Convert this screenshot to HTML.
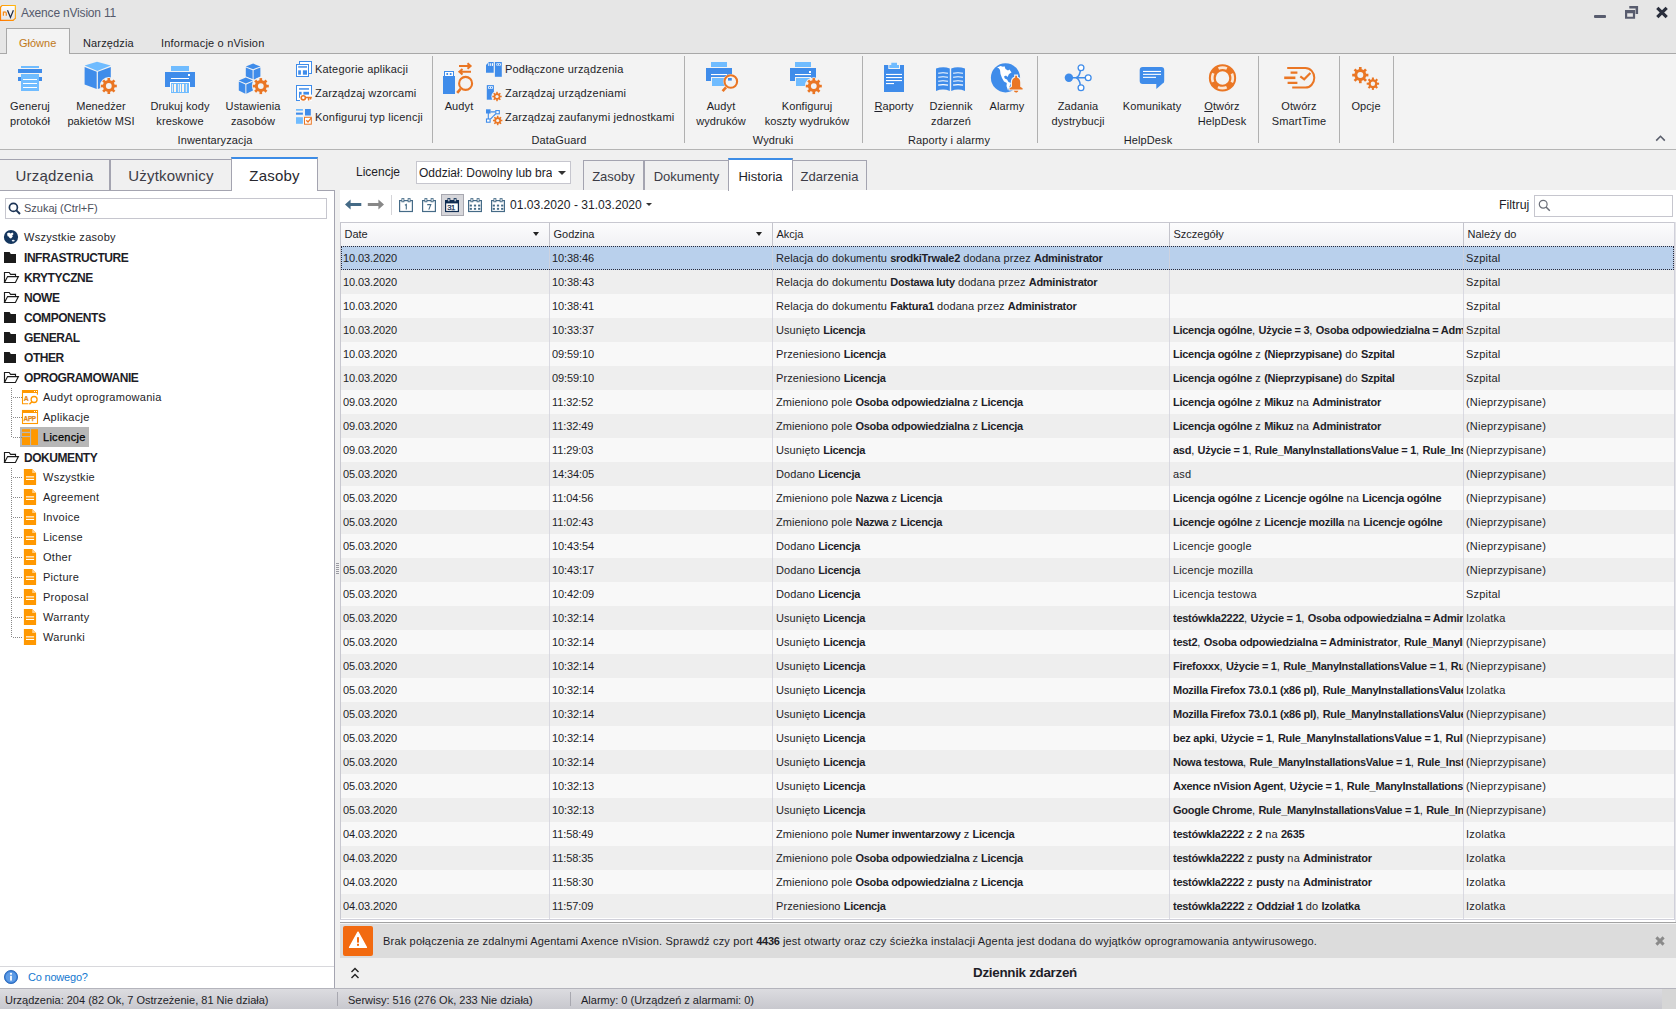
<!DOCTYPE html>
<html><head><meta charset="utf-8"><title>Axence nVision 11</title>
<style>
*{box-sizing:border-box;margin:0;padding:0}
html,body{width:1676px;height:1009px;overflow:hidden;background:#f0f0f0}
body{font-family:"Liberation Sans",sans-serif;font-size:11px;color:#1e1e28;position:relative}
.a{position:absolute}
.t{position:absolute;white-space:nowrap;line-height:14px}
#title{left:0;top:0;width:1676px;height:54px;background:#e6e6e6}
#ribbon{left:0;top:53px;width:1676px;height:97px;background:#f3f3f3;border-top:1px solid #a8a8a8;border-bottom:1px solid #b4b4b4}
#rtab{left:6px;top:28px;width:64px;height:26px;background:#f3f3f3;border:1px solid #a8a8a8;border-bottom:none}
.sep{position:absolute;top:56px;width:1px;height:87px;background:#b0b0b0}
.lb{position:absolute;letter-spacing:0.1px;text-align:center;white-space:nowrap;line-height:15px;font-size:11px;transform:translateX(-50%);top:99px}
.gl{position:absolute;letter-spacing:0.12px;text-align:center;white-space:nowrap;font-size:11px;line-height:14px;transform:translateX(-50%);top:133px}
.sb{position:absolute;white-space:nowrap;letter-spacing:0.2px;font-size:11px;line-height:14px}
.ltab{position:absolute;top:159px;height:32px;background:#f0f0f0;border:1px solid #a4a4b0;font-size:15px;line-height:31px;text-align:center;color:#3c3c46;letter-spacing:0.2px}
.rt{position:absolute;top:160px;height:30px;background:#f0f0f0;border:1px solid #a4a4b0;border-bottom:none;font-size:13px;line-height:32px;text-align:center;color:#3c3c46}
.tr{position:absolute;left:0;height:20px;white-space:nowrap;line-height:20px;font-size:11px;letter-spacing:0.28px}
.tr b{font-size:12px;letter-spacing:-0.45px;position:relative;top:1px}
.row{position:absolute;left:341px;width:1333px;height:24px;line-height:24px;font-size:11px;white-space:nowrap}
.row span{position:absolute;top:0;height:24px;overflow:hidden}
b{letter-spacing:-0.27px}
.c1{left:2px;width:206px;letter-spacing:-0.1px}.c2{left:211px;width:220px;letter-spacing:-0.1px}.c3{left:435px;width:392px;letter-spacing:0.08px}.c4{left:832px;width:290px;letter-spacing:0.15px}.c5{left:1125px;width:205px;letter-spacing:0.2px}
.vl{position:absolute;top:246px;width:1px;height:673px;background:rgba(210,210,220,0.8)}
.hd{position:absolute;top:222px;height:24px;border-top:1px solid #c8c8d0;border-left:1px solid #c4c4cc;background:linear-gradient(#fcfcfd,#f1f1f4);font-size:11px;line-height:23px;padding-left:3.5px}
</style></head><body>

<div class="a" id="title"></div>
<div class="a" id="ribbon"></div>
<div class="a" id="rtab"></div>
<svg class="a" style="left:0px;top:5px;overflow:visible" width="17" height="17" viewBox="0 0 17 17"><defs><linearGradient id="nvg" x1="1" y1="0" x2="0" y2="1"><stop offset="0" stop-color="#ffba10"/><stop offset="1" stop-color="#ff7400"/></linearGradient><linearGradient id="nvw" x1="0" y1="0" x2="0" y2="1"><stop offset="0" stop-color="#fbfbfd"/><stop offset="1" stop-color="#e6e6e8"/></linearGradient></defs><path d="M1.8 0H15.9V13.6L13.4 16H-0.6V2.4Z" fill="url(#nvg)"/><path d="M2.4 1.1H14.8V12.9L12.9 14.8H1.1V2.4Z" fill="url(#nvw)"/><path d="M3.4 10.8V6.4M3.4 8.2Q3.7 6.7 5 6.8Q6.3 6.9 6.3 8.4V10.8" stroke="#f58a1a" stroke-width="1.25" fill="none"/><path d="M7.5 5.3L10.45 12.4L13.4 5.3" stroke="#222c44" stroke-width="1.25" fill="none"/></svg>
<div class="t" style="left:21px;top:6px;font-size:12px;letter-spacing:-0.19px;line-height:15px;color:#555a6c">Axence nVision 11</div>
<div class="t" style="left:19px;top:36px;color:#c07818">Główne</div>
<div class="t" style="left:83px;top:36px;letter-spacing:0.15px">Narzędzia</div>
<div class="t" style="left:161px;top:36px;letter-spacing:0.2px">Informacje o nVision</div>
<svg class="a" style="left:1593px;top:14px;overflow:visible" width="14" height="5" viewBox="0 0 14 5"><rect x="1" y="0.9" width="12" height="3" rx="1" fill="#585c6e"/></svg>
<svg class="a" style="left:1624px;top:5px;overflow:visible" width="15" height="15" viewBox="0 0 15 15"><path d="M5.3 1.1H14.1V8.9H11.6V3.6H5.3Z" fill="#585c6e"/><path d="M1 5.1H11.1V13.7H1Z M3.2 8.3V11.7H8.9V8.3Z" fill="#585c6e" fill-rule="evenodd"/></svg>
<svg class="a" style="left:1655px;top:6px;overflow:visible" width="14" height="14" viewBox="0 0 14 14"><path d="M2.3 1.8L11.7 11.2M11.7 1.8L2.3 11.2" stroke="#2a2e3c" stroke-width="3.2" fill="none"/></svg>
<svg class="a" style="left:1655px;top:133.7px;overflow:visible" width="11" height="8" viewBox="0 0 11 8"><path d="M1.2 6.6L5.5 2.3L9.8 6.6" stroke="#5a5e6c" stroke-width="1.6" fill="none"/></svg>
<div class="sep" style="left:432px"></div>
<div class="sep" style="left:684px"></div>
<div class="sep" style="left:862px"></div>
<div class="sep" style="left:1037px"></div>
<div class="sep" style="left:1258px"></div>
<div class="sep" style="left:1339px"></div>
<div class="sep" style="left:1393px"></div>
<svg class="a" style="left:14px;top:62px;overflow:visible" width="32" height="32" viewBox="0 0 32 32"><rect x="7" y="4" width="18" height="2" fill="#70bcff"/><rect x="4" y="7" width="24" height="4" fill="#3f8cea"/><rect x="4" y="15" width="24" height="4" fill="#3f8cea"/><rect x="7" y="12" width="18" height="17" fill="#70bcff"/><rect x="9" y="17" width="14" height="1" fill="#fff"/><rect x="9" y="21" width="14" height="1" fill="#fff"/><rect x="9" y="25" width="14" height="1" fill="#fff"/></svg>
<div class="lb" style="left:30px">Generuj<br>protokół</div>
<svg class="a" style="left:85px;top:62px;overflow:visible" width="32" height="32" viewBox="0 0 32 32"><polygon points="-0.4,3.6 12,-0.3 25.8,3.6 12.3,8.9" fill="#70bcff"/><polygon points="-0.4,5.0 11.7,9.8 11.7,26.9 -0.4,22.6" fill="#3f8cea"/><polygon points="12.9,9.8 25.8,5.0 25.8,22.6 12.9,26.9" fill="#3f8cea"/><circle cx="23.8" cy="24" r="8.90" fill="#f3f3f3"/><rect x="22.48" y="16.00" width="2.64" height="8.00" fill="#ea7624" transform="rotate(0.0 23.8 24)"/><rect x="22.48" y="16.00" width="2.64" height="8.00" fill="#ea7624" transform="rotate(45.0 23.8 24)"/><rect x="22.48" y="16.00" width="2.64" height="8.00" fill="#ea7624" transform="rotate(90.0 23.8 24)"/><rect x="22.48" y="16.00" width="2.64" height="8.00" fill="#ea7624" transform="rotate(135.0 23.8 24)"/><rect x="22.48" y="16.00" width="2.64" height="8.00" fill="#ea7624" transform="rotate(180.0 23.8 24)"/><rect x="22.48" y="16.00" width="2.64" height="8.00" fill="#ea7624" transform="rotate(225.0 23.8 24)"/><rect x="22.48" y="16.00" width="2.64" height="8.00" fill="#ea7624" transform="rotate(270.0 23.8 24)"/><rect x="22.48" y="16.00" width="2.64" height="8.00" fill="#ea7624" transform="rotate(315.0 23.8 24)"/><circle cx="23.8" cy="24" r="6.00" fill="#ea7624"/><circle cx="23.8" cy="24" r="2.90" fill="#f3f3f3"/></svg>
<div class="lb" style="left:101px">Menedżer<br>pakietów MSI</div>
<svg class="a" style="left:164px;top:62px;overflow:visible" width="32" height="32" viewBox="0 0 32 32"><rect x="7" y="4" width="18" height="5" fill="#70bcff"/><rect x="1" y="10" width="30" height="15" fill="#3f8cea"/><rect x="24" y="12" width="2" height="2" fill="#fff"/><rect x="7" y="16" width="18" height="1" fill="#fff"/><rect x="6" y="20" width="20" height="11" fill="#fff"/><rect x="7" y="21" width="18" height="10" fill="#70bcff"/><rect x="7.9" y="22" width="0.9" height="8" fill="#fff6ec"/><rect x="10" y="22" width="2" height="8" fill="#fff6ec"/><rect x="13.9" y="22" width="0.9" height="8" fill="#fff6ec"/><rect x="15.8" y="22" width="1.2" height="8" fill="#fff6ec"/><rect x="18" y="22" width="2" height="8" fill="#fff6ec"/><rect x="21.8" y="22" width="1" height="8" fill="#fff6ec"/></svg>
<div class="lb" style="left:180px">Drukuj kody<br>kreskowe</div>
<svg class="a" style="left:237px;top:62px;overflow:visible" width="32" height="32" viewBox="0 0 32 32"><polygon points="8.8,4.4 16.1,1.6000000000000005 23.4,4.4 16.1,7.2" fill="#3f8cea"/><polygon points="8.8,5.4 15.600000000000001,8.2 15.600000000000001,17.8 8.8,14.5" fill="#3f8cea"/><polygon points="16.6,8.2 23.4,5.4 23.4,14.5 16.6,17.8" fill="#3f8cea"/><rect x="1" y="14.6" width="15.6" height="18" fill="#f3f3f3" transform="skewY(0)" opacity="0"/><polygon points="0.9,18 8.8,14.6 16.9,17.6 16.9,28.6 8.8,32.6 0.9,28.6" fill="#f3f3f3"/><polygon points="1.8,18.5 8.85,15.6 15.9,18.5 8.85,21.4" fill="#3f8cea"/><polygon points="1.8,19.5 8.35,22.4 8.35,31.799999999999997 1.8,28.4" fill="#3f8cea"/><polygon points="9.35,22.4 15.9,19.5 15.9,28.4 9.35,31.799999999999997" fill="#3f8cea"/><circle cx="23.8" cy="24.1" r="8.90" fill="#f3f3f3"/><rect x="22.48" y="16.10" width="2.64" height="8.00" fill="#ea7624" transform="rotate(0.0 23.8 24.1)"/><rect x="22.48" y="16.10" width="2.64" height="8.00" fill="#ea7624" transform="rotate(45.0 23.8 24.1)"/><rect x="22.48" y="16.10" width="2.64" height="8.00" fill="#ea7624" transform="rotate(90.0 23.8 24.1)"/><rect x="22.48" y="16.10" width="2.64" height="8.00" fill="#ea7624" transform="rotate(135.0 23.8 24.1)"/><rect x="22.48" y="16.10" width="2.64" height="8.00" fill="#ea7624" transform="rotate(180.0 23.8 24.1)"/><rect x="22.48" y="16.10" width="2.64" height="8.00" fill="#ea7624" transform="rotate(225.0 23.8 24.1)"/><rect x="22.48" y="16.10" width="2.64" height="8.00" fill="#ea7624" transform="rotate(270.0 23.8 24.1)"/><rect x="22.48" y="16.10" width="2.64" height="8.00" fill="#ea7624" transform="rotate(315.0 23.8 24.1)"/><circle cx="23.8" cy="24.1" r="6.00" fill="#ea7624"/><circle cx="23.8" cy="24.1" r="2.90" fill="#f3f3f3"/></svg>
<div class="lb" style="left:253px">Ustawienia<br>zasobów</div>
<svg class="a" style="left:443px;top:62px;overflow:visible" width="32" height="32" viewBox="0 0 32 32"><rect x="0" y="14" width="12" height="18" fill="#3f8cea"/><rect x="1" y="9" width="10" height="6" fill="#3f8cea"/><rect x="2" y="10" width="8" height="4" fill="#fff"/><rect x="3.4" y="11" width="1.7" height="2" fill="#3f8cea"/><rect x="6.8" y="11" width="1.7" height="2" fill="#3f8cea"/><path d="M16 4H27M24.5 1.2L27.6 4L24.5 6.8M28 9.8H17M19.5 7L16.4 9.8L19.5 12.6" stroke="#ea7624" stroke-width="2" fill="none"/><circle cx="22.6" cy="21.4" r="6.5" stroke="#ea7624" stroke-width="2.1" fill="none"/><path d="M17.6 26.8L14.2 30.8" stroke="#ea7624" stroke-width="2.6"/></svg>
<div class="lb" style="left:459px">Audyt</div>
<svg class="a" style="left:705px;top:62px;overflow:visible" width="32" height="32" viewBox="0 0 32 32"><rect x="6" y="0" width="16" height="5" fill="#70bcff"/><rect x="1" y="6" width="26" height="13" fill="#3f8cea"/><rect x="6" y="12" width="16" height="1.1" fill="#fff"/><rect x="6" y="15" width="16" height="9.2" fill="#f3f3f3"/><rect x="7" y="16" width="14" height="8" fill="#70bcff"/><circle cx="25.8" cy="19.5" r="7.6" fill="#f3f3f3"/><path d="M20.9 13.8 A7.6 7.6 0 0 1 27 12.1 L27 15.2 L22 15.2Z" fill="#3f8cea" opacity="0"/><rect x="23" y="16" width="3.8" height="2.6" fill="#3f8cea"/><circle cx="25.8" cy="19.5" r="6.3" stroke="#ea7624" stroke-width="2.1" fill="none"/><path d="M21 25.3L17.6 29.2" stroke="#ea7624" stroke-width="2.6"/></svg>
<div class="lb" style="left:721px">Audyt<br>wydruków</div>
<svg class="a" style="left:791px;top:62px;overflow:visible" width="32" height="32" viewBox="0 0 32 32"><rect x="4" y="0" width="16" height="5" fill="#70bcff"/><rect x="-1" y="6" width="26" height="13" fill="#3f8cea"/><rect x="4" y="12" width="16" height="1.1" fill="#fff"/><rect x="4" y="15" width="16" height="9.2" fill="#f3f3f3"/><rect x="5" y="16" width="14" height="8" fill="#70bcff"/><rect x="18" y="9" width="2" height="2" fill="#fff"/><circle cx="22.8" cy="24.1" r="8.90" fill="#f3f3f3"/><rect x="21.48" y="16.10" width="2.64" height="8.00" fill="#ea7624" transform="rotate(0.0 22.8 24.1)"/><rect x="21.48" y="16.10" width="2.64" height="8.00" fill="#ea7624" transform="rotate(45.0 22.8 24.1)"/><rect x="21.48" y="16.10" width="2.64" height="8.00" fill="#ea7624" transform="rotate(90.0 22.8 24.1)"/><rect x="21.48" y="16.10" width="2.64" height="8.00" fill="#ea7624" transform="rotate(135.0 22.8 24.1)"/><rect x="21.48" y="16.10" width="2.64" height="8.00" fill="#ea7624" transform="rotate(180.0 22.8 24.1)"/><rect x="21.48" y="16.10" width="2.64" height="8.00" fill="#ea7624" transform="rotate(225.0 22.8 24.1)"/><rect x="21.48" y="16.10" width="2.64" height="8.00" fill="#ea7624" transform="rotate(270.0 22.8 24.1)"/><rect x="21.48" y="16.10" width="2.64" height="8.00" fill="#ea7624" transform="rotate(315.0 22.8 24.1)"/><circle cx="22.8" cy="24.1" r="6.00" fill="#ea7624"/><circle cx="22.8" cy="24.1" r="2.90" fill="#f3f3f3"/></svg>
<div class="lb" style="left:807px">Konfiguruj<br>koszty wydruków</div>
<svg class="a" style="left:878px;top:62px;overflow:visible" width="32" height="32" viewBox="0 0 32 32"><rect x="6" y="3" width="20" height="27" fill="#3f8cea"/><path d="M10.3 2.2H12.4V-0.1H20V2.2H22V7H10.3Z" fill="#f3f3f3"/><path d="M11.3 3H13.3V0.8H19V3H21V6H11.3Z" fill="#70bcff"/><rect x="8" y="11.9" width="16" height="1.1" fill="#fff"/><rect x="8" y="15" width="16" height="1.1" fill="#fff"/><rect x="8" y="18" width="16" height="1.1" fill="#fff"/><rect x="8" y="21" width="8" height="1.1" fill="#fff"/></svg>
<div class="lb" style="left:894px"><u>R</u>aporty</div>
<svg class="a" style="left:935px;top:62px;overflow:visible" width="32" height="32" viewBox="0 0 32 32"><path d="M1 6.6Q8 4 14.8 6.4V29Q8 26.2 1 29Z" fill="#3f8cea"/><path d="M16.2 6.4Q23 4 30 6.6V29Q23 26.2 16.2 29Z" fill="#3f8cea"/><path d="M3.2 11.200000000000001Q8 10.200000000000001 13 11.200000000000001M18.1 11.200000000000001Q23 10.200000000000001 28 11.200000000000001" stroke="#fff" stroke-width="1.1" fill="none"/><path d="M3.2 15.200000000000001Q8 14.200000000000001 13 15.200000000000001M18.1 15.200000000000001Q23 14.200000000000001 28 15.200000000000001" stroke="#fff" stroke-width="1.1" fill="none"/><path d="M3.2 19.2Q8 18.2 13 19.2M18.1 19.2Q23 18.2 28 19.2" stroke="#fff" stroke-width="1.1" fill="none"/><path d="M3.2 23.099999999999998Q8 22.099999999999998 13 23.099999999999998M18.1 23.099999999999998Q23 22.099999999999998 28 23.099999999999998" stroke="#fff" stroke-width="1.1" fill="none"/></svg>
<div class="lb" style="left:951px">Dziennik<br>zdarzeń</div>
<svg class="a" style="left:991px;top:62px;overflow:visible" width="32" height="32" viewBox="0 0 32 32"><circle cx="14.5" cy="15.8" r="14.6" fill="#3f8cea"/><path d="M6 5.5L9.5 4L12 4.8L13.5 4.2L14.5 7L17 8.5L18.5 7.5L20.5 10.5L18 12L16.5 15L15 13.5L13 14.5L13.8 16.6L16 17.5L17.5 20L20 21L18.5 24.5L17 28.5L15.5 24L15.8 21L13 19.5L11 16L9.5 12L9 8L7.8 6.3Z" fill="#fff"/><path d="M24 13.4H26.2V15.4Q29.5 16.4 29.5 20.2V24.6L31.6 26.2V27.7H18.6V26.2L20.7 24.6V20.2Q20.7 16.4 24 15.4Z" fill="#f3f3f3" stroke="#f3f3f3" stroke-width="1.8"/><path d="M24.2 13.7H26V15.5Q29.2 16.5 29.2 20.2V24.8L31.6 26.2V27.6H18.6V26.2L21 24.8V20.2Q21 16.5 24.2 15.5Z" fill="#ea7624"/><path d="M22.8 28.8H27.4Q27 30.6 25.1 30.6Q23.2 30.6 22.8 28.8Z" fill="#ea7624"/></svg>
<div class="lb" style="left:1007px">Alarmy</div>
<svg class="a" style="left:1062px;top:62px;overflow:visible" width="32" height="32" viewBox="0 0 32 32"><path d="M7 15.7H23M14 15.7Q17.5 14.5 18.3 8.8M14 15.7Q17.5 17 18.3 22.8" stroke="#3f8cea" stroke-width="1.5" fill="none"/><circle cx="6.9" cy="15.7" r="4.2" fill="#3f8cea"/><circle cx="19" cy="5.8" r="2.9" fill="#fff" stroke="#3f8cea" stroke-width="1.3"/><circle cx="26.2" cy="15.7" r="2.9" fill="#fff" stroke="#3f8cea" stroke-width="1.3"/><circle cx="19" cy="25.8" r="2.9" fill="#fff" stroke="#3f8cea" stroke-width="1.3"/></svg>
<div class="lb" style="left:1078px">Zadania<br>dystrybucji</div>
<svg class="a" style="left:1136px;top:62px;overflow:visible" width="32" height="32" viewBox="0 0 32 32"><path d="M6.7 5H25.2Q28.2 5 28.2 8V18.9Q28.2 20.9 26.6 21.5L20.3 27V21.9H6.7Q3.7 21.9 3.7 18.9V8Q3.7 5 6.7 5Z" fill="#3f8cea"/><rect x="7" y="8.9" width="18" height="1.1" fill="#fff"/><rect x="7" y="11.8" width="18" height="1.1" fill="#fff"/><rect x="7" y="14.8" width="13" height="1.1" fill="#fff"/></svg>
<div class="lb" style="left:1152px">Komunikaty</div>
<svg class="a" style="left:1206px;top:62px;overflow:visible" width="32" height="32" viewBox="0 0 32 32"><circle cx="16.5" cy="15.9" r="10.2" stroke="#ea7624" stroke-width="6.9" fill="none"/><circle cx="16.5" cy="15.9" r="10.3" stroke="#fbe6d4" stroke-width="2.7" fill="none" stroke-dasharray="9 7.18" stroke-dashoffset="4.5" transform="rotate(-90 16.5 15.9)"/></svg>
<div class="lb" style="left:1222px"><u>O</u>twórz<br>HelpDesk</div>
<svg class="a" style="left:1283px;top:62px;overflow:visible" width="32" height="32" viewBox="0 0 32 32"><path d="M4.2 6H22.4A8.9 9.8 0 0 1 22.4 25.6H9.2" stroke="#ea7624" stroke-width="2" fill="none"/><path d="M7.6 10.6H14.4M4.6 20.8H14.4" stroke="#ea7624" stroke-width="2.2"/><path d="M1.2 15.8H12.4" stroke="#ea7624" stroke-width="2.6"/><path d="M17.3 14.4L21.2 17.3L27.4 11" stroke="#ea7624" stroke-width="2.2" fill="none"/></svg>
<div class="lb" style="left:1299px">Otwórz<br>SmartTime</div>
<svg class="a" style="left:1350px;top:62px;overflow:visible" width="32" height="32" viewBox="0 0 32 32"><rect x="8.96" y="5.00" width="2.67" height="8.10" fill="#ea7624" transform="rotate(0.0 10.3 13.1)"/><rect x="8.96" y="5.00" width="2.67" height="8.10" fill="#ea7624" transform="rotate(45.0 10.3 13.1)"/><rect x="8.96" y="5.00" width="2.67" height="8.10" fill="#ea7624" transform="rotate(90.0 10.3 13.1)"/><rect x="8.96" y="5.00" width="2.67" height="8.10" fill="#ea7624" transform="rotate(135.0 10.3 13.1)"/><rect x="8.96" y="5.00" width="2.67" height="8.10" fill="#ea7624" transform="rotate(180.0 10.3 13.1)"/><rect x="8.96" y="5.00" width="2.67" height="8.10" fill="#ea7624" transform="rotate(225.0 10.3 13.1)"/><rect x="8.96" y="5.00" width="2.67" height="8.10" fill="#ea7624" transform="rotate(270.0 10.3 13.1)"/><rect x="8.96" y="5.00" width="2.67" height="8.10" fill="#ea7624" transform="rotate(315.0 10.3 13.1)"/><circle cx="10.3" cy="13.1" r="6.00" fill="#ea7624"/><circle cx="10.3" cy="13.1" r="3.00" fill="#f3f3f3"/><rect x="21.88" y="15.50" width="2.05" height="6.20" fill="#ea7624" transform="rotate(0.0 22.9 21.7)"/><rect x="21.88" y="15.50" width="2.05" height="6.20" fill="#ea7624" transform="rotate(45.0 22.9 21.7)"/><rect x="21.88" y="15.50" width="2.05" height="6.20" fill="#ea7624" transform="rotate(90.0 22.9 21.7)"/><rect x="21.88" y="15.50" width="2.05" height="6.20" fill="#ea7624" transform="rotate(135.0 22.9 21.7)"/><rect x="21.88" y="15.50" width="2.05" height="6.20" fill="#ea7624" transform="rotate(180.0 22.9 21.7)"/><rect x="21.88" y="15.50" width="2.05" height="6.20" fill="#ea7624" transform="rotate(225.0 22.9 21.7)"/><rect x="21.88" y="15.50" width="2.05" height="6.20" fill="#ea7624" transform="rotate(270.0 22.9 21.7)"/><rect x="21.88" y="15.50" width="2.05" height="6.20" fill="#ea7624" transform="rotate(315.0 22.9 21.7)"/><circle cx="22.9" cy="21.7" r="4.50" fill="#ea7624"/><circle cx="22.9" cy="21.7" r="2.20" fill="#f3f3f3"/></svg>
<div class="lb" style="left:1366px">Opcje</div>
<div class="gl" style="left:215px">Inwentaryzacja</div>
<div class="gl" style="left:559px">DataGuard</div>
<div class="gl" style="left:773px">Wydruki</div>
<div class="gl" style="left:949px">Raporty i alarmy</div>
<div class="gl" style="left:1148px">HelpDesk</div>
<svg class="a" style="left:296px;top:61px;overflow:visible" width="16" height="16" viewBox="0 0 16 16"><rect x="3.5" y="0.5" width="12" height="12" fill="#fff" stroke="#3f8cea"/><rect x="0.5" y="3.5" width="12" height="12" fill="#fff" stroke="#3f8cea"/><rect x="2.2" y="5.2" width="8.8" height="1.5" fill="#3f8cea"/><rect x="2.2" y="9.3" width="2.7" height="4.4" fill="#3f8cea"/><rect x="6.9" y="9.3" width="4.1" height="4.4" fill="#3f8cea"/></svg>
<div class="sb" style="left:315px;top:62px">Kategorie aplikacji</div>
<svg class="a" style="left:296px;top:85px;overflow:visible" width="16" height="16" viewBox="0 0 16 16"><rect x="0.5" y="0.5" width="15" height="15" fill="#fff" stroke="#3f8cea"/><rect x="3" y="3.2" width="10" height="1.5" fill="#3f8cea"/><rect x="3" y="6.8" width="2.6" height="6" fill="#3f8cea"/><rect x="7.4" y="6.8" width="5.6" height="4" fill="#3f8cea"/><rect x="4" y="9.6" width="12" height="6.4" fill="#fff"/><rect x="0" y="14.6" width="5" height="1.4" fill="#f3f3f3" opacity="0"/><circle cx="7.3" cy="12.8" r="2.1" fill="#fff" stroke="#ea7624" stroke-width="1.6"/><path d="M9.6 12.6H15.8M12.6 12.6V15.4M14.6 12.6V14.6" stroke="#ea7624" stroke-width="1.5" fill="none"/></svg>
<div class="sb" style="left:315px;top:86px">Zarządzaj wzorcami</div>
<svg class="a" style="left:296px;top:109px;overflow:visible" width="16" height="16" viewBox="0 0 16 16"><rect x="0" y="0" width="6.9" height="1.7" fill="#70bcff"/><rect x="0" y="3.6" width="6.9" height="2.1" fill="#3f8cea"/><rect x="9" y="0" width="5.8" height="6.5" fill="#3f8cea"/><rect x="0" y="8.2" width="6.9" height="6.6" fill="#70bcff"/><rect x="8.5" y="8.3" width="6.8" height="6.9" fill="#fff" stroke="#ea7624"/><path d="M10.3 11.2L12 13L15.4 8.8" stroke="#ea7624" stroke-width="1.3" fill="none"/></svg>
<div class="sb" style="left:315px;top:110px">Konfiguruj typ licencji</div>
<svg class="a" style="left:486px;top:61px;overflow:visible" width="16" height="16" viewBox="0 0 16 16"><path d="M0 4L3 1H7.7V11.8H0Z" fill="#3f8cea"/><rect x="2.3" y="2.2" width="1" height="2.7" fill="#fff"/><rect x="4.2" y="2.2" width="1" height="2.7" fill="#fff"/><rect x="6" y="2.2" width="1" height="2.7" fill="#fff"/><rect x="8.9" y="1" width="6.9" height="14.8" fill="#3f8cea"/><rect x="10.4" y="2.4" width="4.4" height="2.1" fill="#fff"/><rect x="11.2" y="3" width="1" height="1" fill="#3f8cea"/><rect x="13" y="3" width="1" height="1" fill="#3f8cea"/></svg>
<div class="sb" style="left:505px;top:62px">Podłączone urządzenia</div>
<svg class="a" style="left:486px;top:85px;overflow:visible" width="16" height="16" viewBox="0 0 16 16"><rect x="0.8" y="0.1" width="7.1" height="14.6" fill="#3f8cea"/><rect x="2.1" y="1.3" width="4.7" height="2.4" fill="#fff"/><rect x="2.9" y="2" width="1.1" height="1.1" fill="#3f8cea"/><rect x="4.9" y="2" width="1.1" height="1.1" fill="#3f8cea"/><circle cx="11" cy="11.5" r="5.60" fill="#f3f3f3"/><rect x="10.22" y="6.80" width="1.55" height="4.70" fill="#ea7624" transform="rotate(0.0 11 11.5)"/><rect x="10.22" y="6.80" width="1.55" height="4.70" fill="#ea7624" transform="rotate(45.0 11 11.5)"/><rect x="10.22" y="6.80" width="1.55" height="4.70" fill="#ea7624" transform="rotate(90.0 11 11.5)"/><rect x="10.22" y="6.80" width="1.55" height="4.70" fill="#ea7624" transform="rotate(135.0 11 11.5)"/><rect x="10.22" y="6.80" width="1.55" height="4.70" fill="#ea7624" transform="rotate(180.0 11 11.5)"/><rect x="10.22" y="6.80" width="1.55" height="4.70" fill="#ea7624" transform="rotate(225.0 11 11.5)"/><rect x="10.22" y="6.80" width="1.55" height="4.70" fill="#ea7624" transform="rotate(270.0 11 11.5)"/><rect x="10.22" y="6.80" width="1.55" height="4.70" fill="#ea7624" transform="rotate(315.0 11 11.5)"/><circle cx="11" cy="11.5" r="3.30" fill="#ea7624"/><circle cx="11" cy="11.5" r="1.60" fill="#f3f3f3"/></svg>
<div class="sb" style="left:505px;top:86px">Zarządzaj urządzeniami</div>
<svg class="a" style="left:486px;top:109px;overflow:visible" width="16" height="16" viewBox="0 0 16 16"><path d="M2.3 4V10M4.6 2.9H9.5M4.4 10.2L9.6 5" stroke="#3f8cea" stroke-width="1.1" fill="none"/><rect x="0" y="0.3" width="4.6" height="4.2" fill="#3f8cea"/><rect x="9.8" y="1.6" width="3.5" height="3.2" fill="#fff" stroke="#3f8cea" stroke-width="1.1"/><rect x="0.5" y="10" width="3.6" height="3.2" fill="#fff" stroke="#3f8cea" stroke-width="1.1"/><circle cx="11.7" cy="11.5" r="5.60" fill="#f3f3f3"/><rect x="10.92" y="6.80" width="1.55" height="4.70" fill="#ea7624" transform="rotate(0.0 11.7 11.5)"/><rect x="10.92" y="6.80" width="1.55" height="4.70" fill="#ea7624" transform="rotate(45.0 11.7 11.5)"/><rect x="10.92" y="6.80" width="1.55" height="4.70" fill="#ea7624" transform="rotate(90.0 11.7 11.5)"/><rect x="10.92" y="6.80" width="1.55" height="4.70" fill="#ea7624" transform="rotate(135.0 11.7 11.5)"/><rect x="10.92" y="6.80" width="1.55" height="4.70" fill="#ea7624" transform="rotate(180.0 11.7 11.5)"/><rect x="10.92" y="6.80" width="1.55" height="4.70" fill="#ea7624" transform="rotate(225.0 11.7 11.5)"/><rect x="10.92" y="6.80" width="1.55" height="4.70" fill="#ea7624" transform="rotate(270.0 11.7 11.5)"/><rect x="10.92" y="6.80" width="1.55" height="4.70" fill="#ea7624" transform="rotate(315.0 11.7 11.5)"/><circle cx="11.7" cy="11.5" r="3.30" fill="#ea7624"/><circle cx="11.7" cy="11.5" r="1.60" fill="#f3f3f3"/></svg>
<div class="sb" style="left:505px;top:110px">Zarządzaj zaufanymi jednostkami</div>
<div class="a" style="left:0;top:190px;width:335px;height:799px;background:#fff;border-top:1px solid #a4a4b0;border-right:1px solid #a4a4b0"></div>
<div class="ltab" style="left:-1px;width:111px">Urządzenia</div>
<div class="ltab" style="left:110px;width:122px">Użytkownicy</div>
<div class="ltab" style="left:231px;width:87px;top:157px;height:34px;background:#fff;border-top:2px solid #3c8ce6;border-bottom:none;line-height:33px;color:#28282f">Zasoby</div>
<div class="a" style="left:5px;top:198px;width:322px;height:21px;border:1px solid #c6c6ce;background:#fff"></div>
<svg class="a" style="left:8px;top:202px;overflow:visible" width="13" height="13" viewBox="0 0 13 13"><circle cx="5.4" cy="5.4" r="4" stroke="#1d3557" stroke-width="1.7" fill="none"/><path d="M8.4 8.4L12 12" stroke="#1d3557" stroke-width="2"/></svg>
<div class="t" style="left:24px;top:201px;color:#4c4f5c">Szukaj (Ctrl+F)</div>
<svg class="a" style="left:3px;top:229px;overflow:visible" width="16" height="16" viewBox="0 0 16 16"><circle cx="8" cy="8" r="7.1" fill="#14365e"/><path d="M4 4.6L6 3.4L7.6 4.4L9.4 3.6L10.6 5L9.2 6.4L9.8 7.6L8 9.4L6.6 9L5.6 7.6L4.6 7.2Z" fill="#fff"/><ellipse cx="10.2" cy="11.6" rx="1.5" ry="0.9" fill="#e8eef6"/></svg>
<div class="tr" style="left:24px;top:227px">Wszystkie zasoby</div>
<svg class="a" style="left:3px;top:251px;overflow:visible" width="16" height="16" viewBox="0 0 16 16"><path d="M1 1H6.6L7.8 3H13V12H1Z" fill="#1b1b1b"/></svg>
<div class="tr" style="left:24px;top:247px"><b>INFRASTRUCTURE</b></div>
<svg class="a" style="left:3px;top:271px;overflow:visible" width="16" height="16" viewBox="0 0 16 16"><path d="M1.5 11.5V1.5H6.2L7.6 3.4H12.5V5.6M1.5 11.5L4.6 5.6H15.4L12.4 11.5Z" stroke="#1b1b1b" stroke-width="1.15" fill="#fff" stroke-linejoin="miter"/></svg>
<div class="tr" style="left:24px;top:267px"><b>KRYTYCZNE</b></div>
<svg class="a" style="left:3px;top:291px;overflow:visible" width="16" height="16" viewBox="0 0 16 16"><path d="M1.5 11.5V1.5H6.2L7.6 3.4H12.5V5.6M1.5 11.5L4.6 5.6H15.4L12.4 11.5Z" stroke="#1b1b1b" stroke-width="1.15" fill="#fff" stroke-linejoin="miter"/></svg>
<div class="tr" style="left:24px;top:287px"><b>NOWE</b></div>
<svg class="a" style="left:3px;top:311px;overflow:visible" width="16" height="16" viewBox="0 0 16 16"><path d="M1 1H6.6L7.8 3H13V12H1Z" fill="#1b1b1b"/></svg>
<div class="tr" style="left:24px;top:307px"><b>COMPONENTS</b></div>
<svg class="a" style="left:3px;top:331px;overflow:visible" width="16" height="16" viewBox="0 0 16 16"><path d="M1 1H6.6L7.8 3H13V12H1Z" fill="#1b1b1b"/></svg>
<div class="tr" style="left:24px;top:327px"><b>GENERAL</b></div>
<svg class="a" style="left:3px;top:351px;overflow:visible" width="16" height="16" viewBox="0 0 16 16"><path d="M1 1H6.6L7.8 3H13V12H1Z" fill="#1b1b1b"/></svg>
<div class="tr" style="left:24px;top:347px"><b>OTHER</b></div>
<svg class="a" style="left:3px;top:371px;overflow:visible" width="16" height="16" viewBox="0 0 16 16"><path d="M1.5 11.5V1.5H6.2L7.6 3.4H12.5V5.6M1.5 11.5L4.6 5.6H15.4L12.4 11.5Z" stroke="#1b1b1b" stroke-width="1.15" fill="#fff" stroke-linejoin="miter"/></svg>
<div class="tr" style="left:24px;top:367px"><b>OPROGRAMOWANIE</b></div>
<svg class="a" style="left:21px;top:389px;overflow:visible" width="18" height="18" viewBox="0 0 18 18"><path d="M16.4 5.8V1.5H1.5V14.7H7.2" fill="none" stroke="#ff9800" stroke-width="1.1"/><rect x="1" y="1" width="16" height="3" fill="#ff9800"/><rect x="13" y="2" width="1" height="1" fill="#fff"/><rect x="15" y="2" width="1" height="1" fill="#fff"/><text x="2.7" y="12.3" font-family="Liberation Sans" font-weight="bold" font-size="6.8" fill="#e2891a" stroke="#e2891a" stroke-width="0.2">A</text><circle cx="13.1" cy="10.5" r="3" fill="#fff" stroke="#ff9800" stroke-width="1.3"/><path d="M10.9 12.7L8.4 15.3" stroke="#ff9800" stroke-width="1.5"/></svg>
<div class="tr" style="left:43px;top:387px">Audyt oprogramowania</div>
<svg class="a" style="left:21px;top:409px;overflow:visible" width="18" height="18" viewBox="0 0 18 18"><rect x="1.5" y="1.5" width="15" height="13" fill="#fff" stroke="#ff9800" stroke-width="1.1"/><rect x="1" y="1" width="16" height="3" fill="#ff9800"/><rect x="13" y="2" width="1" height="1" fill="#fff"/><rect x="15" y="2" width="1" height="1" fill="#fff"/><text x="2.6" y="12.4" font-family="Liberation Sans" font-weight="bold" font-size="6.4" letter-spacing="-0.3" fill="#e2891a" stroke="#e2891a" stroke-width="0.25">APP</text></svg>
<div class="tr" style="left:43px;top:407px">Aplikacje</div>
<div class="a" style="left:20px;top:427px;width:69px;height:20px;background:#b7b7b7"></div>
<svg class="a" style="left:21px;top:428px;overflow:visible" width="18" height="18" viewBox="0 0 18 18"><rect x="1" y="1.2" width="8" height="2.6" fill="#ff9800"/><rect x="1" y="5.1" width="8" height="2.9" fill="#ff9800"/><rect x="1" y="9.1" width="8" height="7.9" fill="#ff9800"/><rect x="10.1" y="1.2" width="6.9" height="15.8" fill="#ff9800"/></svg>
<div class="tr" style="left:43px;top:427px;color:#000;-webkit-text-stroke:0.25px #000">Licencje</div>
<svg class="a" style="left:3px;top:451px;overflow:visible" width="16" height="16" viewBox="0 0 16 16"><path d="M1.5 11.5V1.5H6.2L7.6 3.4H12.5V5.6M1.5 11.5L4.6 5.6H15.4L12.4 11.5Z" stroke="#1b1b1b" stroke-width="1.15" fill="#fff" stroke-linejoin="miter"/></svg>
<div class="tr" style="left:24px;top:447px"><b>DOKUMENTY</b></div>
<svg class="a" style="left:21px;top:468px;overflow:visible" width="18" height="18" viewBox="0 0 18 18"><path d="M2.9 1.1H11.2L15.1 5V17H2.9Z" fill="#ff9800"/><path d="M11.2 1.1V5H15.1Z" fill="#ffd089"/><rect x="5" y="8.3" width="8.1" height="1.1" fill="#fff"/><rect x="5" y="10.9" width="8.1" height="1.1" fill="#fff"/></svg>
<div class="tr" style="left:43px;top:467px">Wszystkie</div>
<svg class="a" style="left:21px;top:488px;overflow:visible" width="18" height="18" viewBox="0 0 18 18"><path d="M2.9 1.1H11.2L15.1 5V17H2.9Z" fill="#ff9800"/><path d="M11.2 1.1V5H15.1Z" fill="#ffd089"/><rect x="5" y="8.3" width="8.1" height="1.1" fill="#fff"/><rect x="5" y="10.9" width="8.1" height="1.1" fill="#fff"/></svg>
<div class="tr" style="left:43px;top:487px">Agreement</div>
<svg class="a" style="left:21px;top:508px;overflow:visible" width="18" height="18" viewBox="0 0 18 18"><path d="M2.9 1.1H11.2L15.1 5V17H2.9Z" fill="#ff9800"/><path d="M11.2 1.1V5H15.1Z" fill="#ffd089"/><rect x="5" y="8.3" width="8.1" height="1.1" fill="#fff"/><rect x="5" y="10.9" width="8.1" height="1.1" fill="#fff"/></svg>
<div class="tr" style="left:43px;top:507px">Invoice</div>
<svg class="a" style="left:21px;top:528px;overflow:visible" width="18" height="18" viewBox="0 0 18 18"><path d="M2.9 1.1H11.2L15.1 5V17H2.9Z" fill="#ff9800"/><path d="M11.2 1.1V5H15.1Z" fill="#ffd089"/><rect x="5" y="8.3" width="8.1" height="1.1" fill="#fff"/><rect x="5" y="10.9" width="8.1" height="1.1" fill="#fff"/></svg>
<div class="tr" style="left:43px;top:527px">License</div>
<svg class="a" style="left:21px;top:548px;overflow:visible" width="18" height="18" viewBox="0 0 18 18"><path d="M2.9 1.1H11.2L15.1 5V17H2.9Z" fill="#ff9800"/><path d="M11.2 1.1V5H15.1Z" fill="#ffd089"/><rect x="5" y="8.3" width="8.1" height="1.1" fill="#fff"/><rect x="5" y="10.9" width="8.1" height="1.1" fill="#fff"/></svg>
<div class="tr" style="left:43px;top:547px">Other</div>
<svg class="a" style="left:21px;top:568px;overflow:visible" width="18" height="18" viewBox="0 0 18 18"><path d="M2.9 1.1H11.2L15.1 5V17H2.9Z" fill="#ff9800"/><path d="M11.2 1.1V5H15.1Z" fill="#ffd089"/><rect x="5" y="8.3" width="8.1" height="1.1" fill="#fff"/><rect x="5" y="10.9" width="8.1" height="1.1" fill="#fff"/></svg>
<div class="tr" style="left:43px;top:567px">Picture</div>
<svg class="a" style="left:21px;top:588px;overflow:visible" width="18" height="18" viewBox="0 0 18 18"><path d="M2.9 1.1H11.2L15.1 5V17H2.9Z" fill="#ff9800"/><path d="M11.2 1.1V5H15.1Z" fill="#ffd089"/><rect x="5" y="8.3" width="8.1" height="1.1" fill="#fff"/><rect x="5" y="10.9" width="8.1" height="1.1" fill="#fff"/></svg>
<div class="tr" style="left:43px;top:587px">Proposal</div>
<svg class="a" style="left:21px;top:608px;overflow:visible" width="18" height="18" viewBox="0 0 18 18"><path d="M2.9 1.1H11.2L15.1 5V17H2.9Z" fill="#ff9800"/><path d="M11.2 1.1V5H15.1Z" fill="#ffd089"/><rect x="5" y="8.3" width="8.1" height="1.1" fill="#fff"/><rect x="5" y="10.9" width="8.1" height="1.1" fill="#fff"/></svg>
<div class="tr" style="left:43px;top:607px">Warranty</div>
<svg class="a" style="left:21px;top:628px;overflow:visible" width="18" height="18" viewBox="0 0 18 18"><path d="M2.9 1.1H11.2L15.1 5V17H2.9Z" fill="#ff9800"/><path d="M11.2 1.1V5H15.1Z" fill="#ffd089"/><rect x="5" y="8.3" width="8.1" height="1.1" fill="#fff"/><rect x="5" y="10.9" width="8.1" height="1.1" fill="#fff"/></svg>
<div class="tr" style="left:43px;top:627px">Warunki</div>
<div class="a" style="left:11px;top:387px;width:1px;height:51px;background-image:linear-gradient(45deg,#888 25%,transparent 25%,transparent 75%,#888 75%),linear-gradient(45deg,#888 25%,transparent 25%,transparent 75%,#888 75%);background-size:2px 2px;background-position:0 0,1px 1px"></div>
<div class="a" style="left:12px;top:397px;width:10px;height:1px;background-image:linear-gradient(45deg,#888 25%,transparent 25%,transparent 75%,#888 75%),linear-gradient(45deg,#888 25%,transparent 25%,transparent 75%,#888 75%);background-size:2px 2px;background-position:0 0,1px 1px"></div>
<div class="a" style="left:12px;top:417px;width:10px;height:1px;background-image:linear-gradient(45deg,#888 25%,transparent 25%,transparent 75%,#888 75%),linear-gradient(45deg,#888 25%,transparent 25%,transparent 75%,#888 75%);background-size:2px 2px;background-position:0 0,1px 1px"></div>
<div class="a" style="left:12px;top:437px;width:10px;height:1px;background-image:linear-gradient(45deg,#888 25%,transparent 25%,transparent 75%,#888 75%),linear-gradient(45deg,#888 25%,transparent 25%,transparent 75%,#888 75%);background-size:2px 2px;background-position:0 0,1px 1px"></div>
<div class="a" style="left:11px;top:467px;width:1px;height:171px;background-image:linear-gradient(45deg,#888 25%,transparent 25%,transparent 75%,#888 75%),linear-gradient(45deg,#888 25%,transparent 25%,transparent 75%,#888 75%);background-size:2px 2px;background-position:0 0,1px 1px"></div>
<div class="a" style="left:12px;top:477px;width:10px;height:1px;background-image:linear-gradient(45deg,#888 25%,transparent 25%,transparent 75%,#888 75%),linear-gradient(45deg,#888 25%,transparent 25%,transparent 75%,#888 75%);background-size:2px 2px;background-position:0 0,1px 1px"></div>
<div class="a" style="left:12px;top:497px;width:10px;height:1px;background-image:linear-gradient(45deg,#888 25%,transparent 25%,transparent 75%,#888 75%),linear-gradient(45deg,#888 25%,transparent 25%,transparent 75%,#888 75%);background-size:2px 2px;background-position:0 0,1px 1px"></div>
<div class="a" style="left:12px;top:517px;width:10px;height:1px;background-image:linear-gradient(45deg,#888 25%,transparent 25%,transparent 75%,#888 75%),linear-gradient(45deg,#888 25%,transparent 25%,transparent 75%,#888 75%);background-size:2px 2px;background-position:0 0,1px 1px"></div>
<div class="a" style="left:12px;top:537px;width:10px;height:1px;background-image:linear-gradient(45deg,#888 25%,transparent 25%,transparent 75%,#888 75%),linear-gradient(45deg,#888 25%,transparent 25%,transparent 75%,#888 75%);background-size:2px 2px;background-position:0 0,1px 1px"></div>
<div class="a" style="left:12px;top:557px;width:10px;height:1px;background-image:linear-gradient(45deg,#888 25%,transparent 25%,transparent 75%,#888 75%),linear-gradient(45deg,#888 25%,transparent 25%,transparent 75%,#888 75%);background-size:2px 2px;background-position:0 0,1px 1px"></div>
<div class="a" style="left:12px;top:577px;width:10px;height:1px;background-image:linear-gradient(45deg,#888 25%,transparent 25%,transparent 75%,#888 75%),linear-gradient(45deg,#888 25%,transparent 25%,transparent 75%,#888 75%);background-size:2px 2px;background-position:0 0,1px 1px"></div>
<div class="a" style="left:12px;top:597px;width:10px;height:1px;background-image:linear-gradient(45deg,#888 25%,transparent 25%,transparent 75%,#888 75%),linear-gradient(45deg,#888 25%,transparent 25%,transparent 75%,#888 75%);background-size:2px 2px;background-position:0 0,1px 1px"></div>
<div class="a" style="left:12px;top:617px;width:10px;height:1px;background-image:linear-gradient(45deg,#888 25%,transparent 25%,transparent 75%,#888 75%),linear-gradient(45deg,#888 25%,transparent 25%,transparent 75%,#888 75%);background-size:2px 2px;background-position:0 0,1px 1px"></div>
<div class="a" style="left:12px;top:637px;width:10px;height:1px;background-image:linear-gradient(45deg,#888 25%,transparent 25%,transparent 75%,#888 75%),linear-gradient(45deg,#888 25%,transparent 25%,transparent 75%,#888 75%);background-size:2px 2px;background-position:0 0,1px 1px"></div>
<div class="a" style="left:0;top:966px;width:334px;height:1px;background:#d8d8dc"></div>
<svg class="a" style="left:4px;top:970px;overflow:visible" width="14" height="14" viewBox="0 0 14 14"><circle cx="7" cy="7" r="6.6" fill="#3b7fd6" stroke="#1f5fb4" stroke-width="0.8"/><circle cx="7" cy="7" r="5.3" fill="#5e9ce6"/><rect x="6.1" y="5.8" width="1.8" height="4.8" fill="#fff"/><circle cx="7" cy="3.8" r="1.1" fill="#fff"/></svg>
<div class="t" style="left:28px;top:970px;color:#1478d0;letter-spacing:-0.2px">Co nowego?</div>
<div class="a" style="left:336px;top:563px;width:3px;height:12px;background:repeating-linear-gradient(#9a9aa2 0 1px,transparent 1px 2px)"></div>
<div class="t" style="left:356px;top:165px;font-size:12px;line-height:15px">Licencje</div>
<div class="a" style="left:416px;top:161px;width:155px;height:23px;border:1px solid #c6c6ce;background:#fff"></div>
<div class="t" style="left:419px;top:165.5px;font-size:12px;line-height:15px;width:132.5px;overflow:hidden">Oddział: Dowolny lub brak</div>
<div class="a" style="left:558px;top:171px;width:0;height:0;border-left:4px solid transparent;border-right:4px solid transparent;border-top:4px solid #333"></div>
<div class="a" style="left:340px;top:190px;width:1336px;height:735px;background:#fff"></div>
<div class="rt" style="left:583px;width:61px">Zasoby</div>
<div class="rt" style="left:644px;width:85px">Dokumenty</div>
<div class="rt" style="left:728px;width:65px;top:158px;height:33px;background:#fff;border-top:2px solid #3c8ce6;line-height:34px;color:#1e1e28">Historia</div>
<div class="rt" style="left:792px;width:75px">Zdarzenia</div>
<svg class="a" style="left:345px;top:198px;overflow:visible" width="17" height="13" viewBox="0 0 17 13"><path d="M0 6.5L5.6 1.6V4.9H16.3V8.1H5.6V11.4Z" fill="#446a86"/></svg>
<svg class="a" style="left:367px;top:198px;overflow:visible" width="18" height="13" viewBox="0 0 18 13"><path d="M17 6.5L11.4 1.6V4.9H0.8V8.1H11.4V11.4Z" fill="#888"/></svg>
<div class="a" style="left:391px;top:195px;width:1px;height:20px;background:#d4d4d8"></div>
<div class="a" style="left:441px;top:194px;width:23px;height:22px;background:#d6d6da;border:1px solid #a8a8b0"></div>
<svg class="a" style="left:398px;top:197px;overflow:visible" width="16" height="16" viewBox="0 0 16 16"><rect x="1.6" y="3.6" width="12.8" height="10.9" fill="#fff" stroke="#456b87" stroke-width="1.2"/><rect x="3.9" y="1.6" width="2" height="3.2" fill="#fff" stroke="#456b87" stroke-width="0.9"/><rect x="10.1" y="1.6" width="2" height="3.2" fill="#fff" stroke="#456b87" stroke-width="0.9"/><path d="M6.9 8.2L8.3 7.4V12.6" stroke="#456b87" stroke-width="1.1" fill="none"/></svg>
<svg class="a" style="left:421px;top:197px;overflow:visible" width="16" height="16" viewBox="0 0 16 16"><rect x="1.6" y="3.6" width="12.8" height="10.9" fill="#fff" stroke="#456b87" stroke-width="1.2"/><rect x="3.9" y="1.6" width="2" height="3.2" fill="#fff" stroke="#456b87" stroke-width="0.9"/><rect x="10.1" y="1.6" width="2" height="3.2" fill="#fff" stroke="#456b87" stroke-width="0.9"/><path d="M6.2 7.6H9.8L7.8 12.6" stroke="#456b87" stroke-width="1.1" fill="none"/></svg>
<svg class="a" style="left:444px;top:197px;overflow:visible" width="16" height="16" viewBox="0 0 16 16"><rect x="1.6" y="3.6" width="12.8" height="10.9" fill="#fff" stroke="#0f2d52" stroke-width="1.2"/><rect x="1" y="3" width="14" height="3.4" fill="#0f2d52"/><rect x="3.9" y="1.6" width="2" height="3.2" fill="#fff" stroke="#0f2d52" stroke-width="0.9"/><rect x="10.1" y="1.6" width="2" height="3.2" fill="#fff" stroke="#0f2d52" stroke-width="0.9"/><text x="3.2" y="13.4" font-family="Liberation Sans" font-size="7.6" letter-spacing="-0.5" fill="#0f2d52" stroke="#0f2d52" stroke-width="0.25">31</text></svg>
<svg class="a" style="left:467px;top:197px;overflow:visible" width="16" height="16" viewBox="0 0 16 16"><rect x="1.6" y="3.6" width="12.8" height="10.9" fill="#fff" stroke="#456b87" stroke-width="1.2"/><rect x="3.9" y="1.6" width="2" height="3.2" fill="#fff" stroke="#456b87" stroke-width="0.9"/><rect x="10.1" y="1.6" width="2" height="3.2" fill="#fff" stroke="#456b87" stroke-width="0.9"/><rect x="2.7" y="7.6" width="2.2" height="1.9" fill="#456b87"/><rect x="6.9" y="7.6" width="2.2" height="1.9" fill="#456b87"/><rect x="11.1" y="7.6" width="2.2" height="1.9" fill="#456b87"/><rect x="2.7" y="10.9" width="2.2" height="1.9" fill="#456b87"/><rect x="6.9" y="10.9" width="2.2" height="1.9" fill="#456b87"/><rect x="11.1" y="10.9" width="2.2" height="1.9" fill="#456b87"/></svg>
<svg class="a" style="left:490px;top:197px;overflow:visible" width="16" height="16" viewBox="0 0 16 16"><rect x="1.6" y="3.6" width="12.8" height="10.9" fill="#fff" stroke="#456b87" stroke-width="1.2"/><rect x="3.9" y="1.6" width="2" height="3.2" fill="#fff" stroke="#456b87" stroke-width="0.9"/><rect x="10.1" y="1.6" width="2" height="3.2" fill="#fff" stroke="#456b87" stroke-width="0.9"/><rect x="2.7" y="7.6" width="2.2" height="1.9" fill="#456b87"/><rect x="6.9" y="7.6" width="2.2" height="1.9" fill="#456b87"/><rect x="11.1" y="7.6" width="2.2" height="1.9" fill="#456b87"/><rect x="2.7" y="10.9" width="2.2" height="1.9" fill="#456b87"/><rect x="6.9" y="10.9" width="2.2" height="1.9" fill="#456b87"/><rect x="11.1" y="10.9" width="2.2" height="1.9" fill="#456b87"/></svg>
<div class="t" style="left:510px;top:198px;font-size:12.1px;line-height:15px">01.03.2020 - 31.03.2020</div>
<div class="a" style="left:646px;top:203px;width:0;height:0;border-left:3px solid transparent;border-right:3px solid transparent;border-top:3px solid #333"></div>
<div class="t" style="left:1499px;top:198px;font-size:12.4px;line-height:15px">Filtruj</div>
<div class="a" style="left:1534px;top:195px;width:139px;height:22px;border:1px solid #c6c6ce;background:#fff"></div>
<svg class="a" style="left:1538px;top:199px;overflow:visible" width="13" height="13" viewBox="0 0 13 13"><circle cx="5.2" cy="5.2" r="3.9" stroke="#6a6e78" stroke-width="1.2" fill="none"/><path d="M8 8L11.8 11.8" stroke="#6a6e78" stroke-width="1.5"/></svg>
<div class="a" style="left:340px;top:222px;width:1px;height:698px;background:#c8c8d0"></div>
<div class="hd" style="left:340px;width:209px">Date</div>
<div class="a" style="left:533px;top:232px;width:0;height:0;border-left:3.5px solid transparent;border-right:3.5px solid transparent;border-top:4px solid #222"></div>
<div class="hd" style="left:549px;width:223px">Godzina</div>
<div class="a" style="left:756px;top:232px;width:0;height:0;border-left:3.5px solid transparent;border-right:3.5px solid transparent;border-top:4px solid #222"></div>
<div class="hd" style="left:772px;width:397px">Akcja</div>
<div class="hd" style="left:1169px;width:294px">Szczegóły</div>
<div class="hd" style="left:1463px;width:211px">Należy do</div>
<div class="row" style="top:246px;background:#b9d0ec"><span class="c1">10.03.2020</span><span class="c2">10:38:46</span><span class="c3">Relacja do dokumentu <b>srodkiTrwale2</b> dodana przez <b>Administrator</b></span><span class="c4"></span><span class="c5">Szpital</span></div>
<div class="row" style="top:270px;background:#eeeeee"><span class="c1">10.03.2020</span><span class="c2">10:38:43</span><span class="c3">Relacja do dokumentu <b>Dostawa luty</b> dodana przez <b>Administrator</b></span><span class="c4"></span><span class="c5">Szpital</span></div>
<div class="row" style="top:294px;background:#f8f8f8"><span class="c1">10.03.2020</span><span class="c2">10:38:41</span><span class="c3">Relacja do dokumentu <b>Faktura1</b> dodana przez <b>Administrator</b></span><span class="c4"></span><span class="c5">Szpital</span></div>
<div class="row" style="top:318px;background:#eeeeee"><span class="c1">10.03.2020</span><span class="c2">10:33:37</span><span class="c3">Usunięto <b>Licencja</b></span><span class="c4"><b>Licencja ogólne</b>, <b>Użycie = 3</b>, <b>Osoba odpowiedzialna = Administrator</b></span><span class="c5">Szpital</span></div>
<div class="row" style="top:342px;background:#f8f8f8"><span class="c1">10.03.2020</span><span class="c2">09:59:10</span><span class="c3">Przeniesiono <b>Licencja</b></span><span class="c4"><b>Licencja ogólne</b> z <b>(Nieprzypisane)</b> do <b>Szpital</b></span><span class="c5">Szpital</span></div>
<div class="row" style="top:366px;background:#eeeeee"><span class="c1">10.03.2020</span><span class="c2">09:59:10</span><span class="c3">Przeniesiono <b>Licencja</b></span><span class="c4"><b>Licencja ogólne</b> z <b>(Nieprzypisane)</b> do <b>Szpital</b></span><span class="c5">Szpital</span></div>
<div class="row" style="top:390px;background:#f8f8f8"><span class="c1">09.03.2020</span><span class="c2">11:32:52</span><span class="c3">Zmieniono pole <b>Osoba odpowiedzialna</b> z <b>Licencja</b></span><span class="c4"><b>Licencja ogólne</b> z <b>Mikuz</b> na <b>Administrator</b></span><span class="c5">(Nieprzypisane)</span></div>
<div class="row" style="top:414px;background:#eeeeee"><span class="c1">09.03.2020</span><span class="c2">11:32:49</span><span class="c3">Zmieniono pole <b>Osoba odpowiedzialna</b> z <b>Licencja</b></span><span class="c4"><b>Licencja ogólne</b> z <b>Mikuz</b> na <b>Administrator</b></span><span class="c5">(Nieprzypisane)</span></div>
<div class="row" style="top:438px;background:#f8f8f8"><span class="c1">09.03.2020</span><span class="c2">11:29:03</span><span class="c3">Usunięto <b>Licencja</b></span><span class="c4"><b>asd</b>, <b>Użycie = 1</b>, <b>Rule_ManyInstallationsValue = 1</b>, <b>Rule_InstallationsValue = 1</b></span><span class="c5">(Nieprzypisane)</span></div>
<div class="row" style="top:462px;background:#eeeeee"><span class="c1">05.03.2020</span><span class="c2">14:34:05</span><span class="c3">Dodano <b>Licencja</b></span><span class="c4">asd</span><span class="c5">(Nieprzypisane)</span></div>
<div class="row" style="top:486px;background:#f8f8f8"><span class="c1">05.03.2020</span><span class="c2">11:04:56</span><span class="c3">Zmieniono pole <b>Nazwa</b> z <b>Licencja</b></span><span class="c4"><b>Licencja ogólne</b> z <b>Licencje ogólne</b> na <b>Licencja ogólne</b></span><span class="c5">(Nieprzypisane)</span></div>
<div class="row" style="top:510px;background:#eeeeee"><span class="c1">05.03.2020</span><span class="c2">11:02:43</span><span class="c3">Zmieniono pole <b>Nazwa</b> z <b>Licencja</b></span><span class="c4"><b>Licencje ogólne</b> z <b>Licencje mozilla</b> na <b>Licencje ogólne</b></span><span class="c5">(Nieprzypisane)</span></div>
<div class="row" style="top:534px;background:#f8f8f8"><span class="c1">05.03.2020</span><span class="c2">10:43:54</span><span class="c3">Dodano <b>Licencja</b></span><span class="c4">Licencje google</span><span class="c5">(Nieprzypisane)</span></div>
<div class="row" style="top:558px;background:#eeeeee"><span class="c1">05.03.2020</span><span class="c2">10:43:17</span><span class="c3">Dodano <b>Licencja</b></span><span class="c4">Licencje mozilla</span><span class="c5">(Nieprzypisane)</span></div>
<div class="row" style="top:582px;background:#f8f8f8"><span class="c1">05.03.2020</span><span class="c2">10:42:09</span><span class="c3">Dodano <b>Licencja</b></span><span class="c4">Licencja testowa</span><span class="c5">Szpital</span></div>
<div class="row" style="top:606px;background:#eeeeee"><span class="c1">05.03.2020</span><span class="c2">10:32:14</span><span class="c3">Usunięto <b>Licencja</b></span><span class="c4"><b>testówkla2222</b>, <b>Użycie = 1</b>, <b>Osoba odpowiedzialna = Administrator</b></span><span class="c5">Izolatka</span></div>
<div class="row" style="top:630px;background:#f8f8f8"><span class="c1">05.03.2020</span><span class="c2">10:32:14</span><span class="c3">Usunięto <b>Licencja</b></span><span class="c4"><b>test2</b>, <b>Osoba odpowiedzialna = Administrator</b>, <b>Rule_ManyInstallationsValue = 1</b></span><span class="c5">(Nieprzypisane)</span></div>
<div class="row" style="top:654px;background:#eeeeee"><span class="c1">05.03.2020</span><span class="c2">10:32:14</span><span class="c3">Usunięto <b>Licencja</b></span><span class="c4"><b>Firefoxxx</b>, <b>Użycie = 1</b>, <b>Rule_ManyInstallationsValue = 1</b>, <b>Rule_InstallationsValue = 1</b></span><span class="c5">(Nieprzypisane)</span></div>
<div class="row" style="top:678px;background:#f8f8f8"><span class="c1">05.03.2020</span><span class="c2">10:32:14</span><span class="c3">Usunięto <b>Licencja</b></span><span class="c4"><b>Mozilla Firefox 73.0.1 (x86 pl)</b>, <b>Rule_ManyInstallationsValue = 1</b></span><span class="c5">Izolatka</span></div>
<div class="row" style="top:702px;background:#eeeeee"><span class="c1">05.03.2020</span><span class="c2">10:32:14</span><span class="c3">Usunięto <b>Licencja</b></span><span class="c4"><b>Mozilla Firefox 73.0.1 (x86 pl)</b>, <b>Rule_ManyInstallationsValue = 1</b></span><span class="c5">(Nieprzypisane)</span></div>
<div class="row" style="top:726px;background:#f8f8f8"><span class="c1">05.03.2020</span><span class="c2">10:32:14</span><span class="c3">Usunięto <b>Licencja</b></span><span class="c4"><b>bez apki</b>, <b>Użycie = 1</b>, <b>Rule_ManyInstallationsValue = 1</b>, <b>Rule_InstallationsValue = 1</b></span><span class="c5">(Nieprzypisane)</span></div>
<div class="row" style="top:750px;background:#eeeeee"><span class="c1">05.03.2020</span><span class="c2">10:32:14</span><span class="c3">Usunięto <b>Licencja</b></span><span class="c4"><b>Nowa testowa</b>, <b>Rule_ManyInstallationsValue = 1</b>, <b>Rule_InstallationsValue = 1</b></span><span class="c5">(Nieprzypisane)</span></div>
<div class="row" style="top:774px;background:#f8f8f8"><span class="c1">05.03.2020</span><span class="c2">10:32:13</span><span class="c3">Usunięto <b>Licencja</b></span><span class="c4"><b>Axence nVision Agent</b>, <b>Użycie = 1</b>, <b>Rule_ManyInstallationsValue = 1</b></span><span class="c5">(Nieprzypisane)</span></div>
<div class="row" style="top:798px;background:#eeeeee"><span class="c1">05.03.2020</span><span class="c2">10:32:13</span><span class="c3">Usunięto <b>Licencja</b></span><span class="c4"><b>Google Chrome</b>, <b>Rule_ManyInstallationsValue = 1</b>, <b>Rule_InstallationsValue = 1</b></span><span class="c5">(Nieprzypisane)</span></div>
<div class="row" style="top:822px;background:#f8f8f8"><span class="c1">04.03.2020</span><span class="c2">11:58:49</span><span class="c3">Zmieniono pole <b>Numer inwentarzowy</b> z <b>Licencja</b></span><span class="c4"><b>testówkla2222</b> z <b>2</b> na <b>2635</b></span><span class="c5">Izolatka</span></div>
<div class="row" style="top:846px;background:#eeeeee"><span class="c1">04.03.2020</span><span class="c2">11:58:35</span><span class="c3">Zmieniono pole <b>Osoba odpowiedzialna</b> z <b>Licencja</b></span><span class="c4"><b>testówkla2222</b> z <b>pusty</b> na <b>Administrator</b></span><span class="c5">Izolatka</span></div>
<div class="row" style="top:870px;background:#f8f8f8"><span class="c1">04.03.2020</span><span class="c2">11:58:30</span><span class="c3">Zmieniono pole <b>Osoba odpowiedzialna</b> z <b>Licencja</b></span><span class="c4"><b>testówkla2222</b> z <b>pusty</b> na <b>Administrator</b></span><span class="c5">Izolatka</span></div>
<div class="row" style="top:894px;background:#eeeeee"><span class="c1">04.03.2020</span><span class="c2">11:57:09</span><span class="c3">Przeniesiono <b>Licencja</b></span><span class="c4"><b>testówkla2222</b> z <b>Oddział 1</b> do <b>Izolatka</b></span><span class="c5">Izolatka</span></div>
<div class="vl" style="left:549px"></div>
<div class="vl" style="left:772px"></div>
<div class="vl" style="left:1169px"></div>
<div class="vl" style="left:1463px"></div>
<div class="a" style="left:341px;top:246px;width:1333px;height:24px;border:1px dotted #2a2a3a"></div>
<div class="a" style="left:340px;top:919px;width:1335px;height:1px;background:#d0d0da"></div>
<div class="a" style="left:1674px;top:222px;width:1px;height:698px;background:#d0d0da"></div>
<div class="a" style="left:1675px;top:222px;width:1px;height:700px;background:#e4e4e8"></div>
<div class="a" style="left:340px;top:922px;width:1336px;height:1px;background:#a2a2a2"></div>
<div class="a" style="left:340px;top:923px;width:1336px;height:1px;background:#f4f4f4"></div>
<div class="a" style="left:340px;top:924px;width:1336px;height:34px;background:#dcdcdc"></div>
<div class="a" style="left:343px;top:926px;width:30px;height:30px;background:#f26a10;border-radius:2px"></div>
<svg class="a" style="left:349px;top:931px;overflow:visible" width="18" height="18" viewBox="0 0 18 18"><path d="M9 1.2L17.4 16.4H0.6Z" fill="#fff" stroke="#fff" stroke-width="1.4" stroke-linejoin="round"/><rect x="8" y="6.2" width="2" height="5.4" fill="#f26a10"/><rect x="8" y="12.8" width="2" height="2" fill="#f26a10"/></svg>
<div class="t" style="left:383px;top:934px;letter-spacing:0.19px">Brak połączenia ze zdalnymi Agentami Axence nVision. Sprawdź czy port <b>4436</b> jest otwarty oraz czy ścieżka instalacji Agenta jest dodana do wyjątków oprogramowania antywirusowego.</div>
<svg class="a" style="left:1655.3px;top:936.4px;overflow:visible" width="10" height="10" viewBox="0 0 10 10"><path d="M1.4 1.4L8.6 8.6M8.6 1.4L1.4 8.6" stroke="#8a8a8a" stroke-width="2.9"/></svg>
<div class="a" style="left:340px;top:958px;width:1336px;height:31px;background:#f0f0f0"></div>
<svg class="a" style="left:350px;top:966px;overflow:visible" width="10" height="14" viewBox="0 0 10 14"><path d="M1.5 6L5 2.5L8.5 6M1.5 12L5 8.5L8.5 12" stroke="#222" stroke-width="1.4" fill="none"/></svg>
<div class="t" style="left:1025px;top:965px;font-size:13.4px;line-height:16px;font-weight:bold;transform:translateX(-50%);letter-spacing:-0.3px">Dziennik zdarzeń</div>
<div class="a" style="left:0;top:988px;width:1676px;height:21px;background:linear-gradient(#dcdce0,#c8c8ce);border-top:1px solid #b4b4bc"></div>
<div class="a" style="left:1662px;top:989px;width:14px;height:20px;background:#d6d6d6"></div>
<div class="t" style="left:5px;top:993px">Urządzenia: 204 (82 Ok, 7 Ostrzeżenie, 81 Nie działa)</div>
<div class="t" style="left:348px;top:993px">Serwisy: 516 (276 Ok, 233 Nie działa)</div>
<div class="t" style="left:581px;top:993px">Alarmy: 0 (Urządzeń z alarmami: 0)</div>
<div class="a" style="left:337px;top:992px;width:1px;height:14px;background:#a8a8b0"></div>
<div class="a" style="left:570px;top:992px;width:1px;height:14px;background:#a8a8b0"></div>
</body></html>
